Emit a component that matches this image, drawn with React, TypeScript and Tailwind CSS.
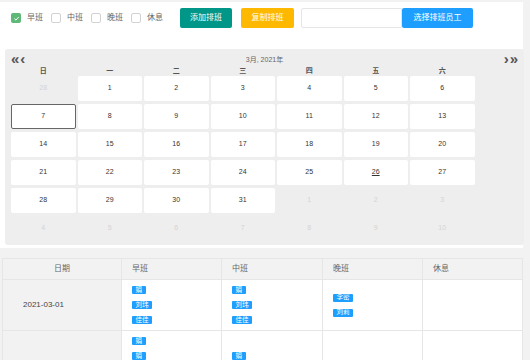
const font = "font-['Liberation_Sans','Noto_Sans_CJK_SC',sans-serif]";

const weekDays = ["日", "一", "二", "三", "四", "五", "六"];

type Day = { n: number; cur: boolean };

const days: Day[] = [
  { n: 28, cur: false },
  ...Array.from({ length: 31 }, (_, i) => ({ n: i + 1, cur: true })),
  ...Array.from({ length: 10 }, (_, i) => ({ n: i + 1, cur: false })),
];

function Check({ label, checked }: { label: string; checked?: boolean }) {
  return (
    <label className="flex items-center mr-[8px]">
      {checked ? (
        <span className="w-[10px] h-[10px] rounded-[2px] bg-[#5FB878] flex items-center justify-center">
          <svg width="7" height="7" viewBox="0 0 10 10">
            <path d="M2 5.2 L4.2 7.3 L8.2 2.8" fill="none" stroke="white" strokeWidth="1.4" />
          </svg>
        </span>
      ) : (
        <span className="w-[10px] h-[10px] rounded-[2px] bg-white border border-[#d2d2d2]" />
      )}
      <span className="ml-[6px] text-[8px] text-[#666]">{label}</span>
    </label>
  );
}

function Tag({ name }: { name: string }) {
  return (
    <span className="inline-flex items-center h-[8px] px-[3.5px] rounded-[1px] bg-[#1E9FFF] text-white text-[6.5px] leading-none">
      {name}
    </span>
  );
}

function Tags({ names }: { names: string[] }) {
  return (
    <div className="flex flex-col items-start gap-[7px]">
      {names.map((n, i) => (
        <Tag key={i} name={n} />
      ))}
    </div>
  );
}

const rows = [
  {
    date: "2021-03-01",
    early: ["娟", "刘玮", "佳佳"],
    mid: ["娟", "刘玮", "佳佳"],
    late: ["李密", "刘莉"],
    rest: [] as string[],
  },
  {
    date: "2021-03-02",
    early: ["娟", "娟", "刘玮", "佳佳", "李密"],
    mid: ["娟", "刘玮", "佳佳"],
    late: ["李密", "刘莉"],
    rest: [] as string[],
  },
];

export default function App() {
  return (
    <div className={`w-[530px] h-[360px] overflow-hidden bg-[#f2f2f2] pt-[2px] antialiased ${font}`}>
      {/* top panel */}
      <div className="w-[523px] bg-white pt-[6px] pb-[3px]">
        <div className="flex items-center h-[20px] pl-[11px]">
          <Check label="早班" checked />
          <Check label="中班" />
          <Check label="晚班" />
          <Check label="休息" />
          <button className="ml-[9px] w-[52px] h-[20px] rounded-[2px] bg-[#009688] text-white text-[8px]">
            添加排班
          </button>
          <button className="ml-[9px] w-[53px] h-[20px] rounded-[2px] bg-[#FFB800] text-white text-[8px]">
            复制排班
          </button>
          <input
            className="ml-[7px] w-[101px] h-[20px] border border-[#e6e6e6] rounded-l-[2px] bg-white outline-none"
            readOnly
          />
          <button className="w-[71px] h-[20px] rounded-[2px] bg-[#1E9FFF] text-white text-[8px]">
            选择排班员工
          </button>
        </div>

        {/* calendar */}
        <div className="ml-[5px] mt-[21px] w-[519px] bg-[#eeeeee] rounded-[3px] pt-[4px] pb-[4px]">
          <div className="relative flex items-center justify-between h-[12px] px-[6px] text-[#555]">
            <div className="flex items-center font-bold text-[15px] leading-none -mt-[2px]">
              <span>«</span>
              <span className="ml-[1px]">‹</span>
            </div>
            <div className="absolute left-0 right-0 text-center text-[7px] text-[#666] leading-none">3月, 2021年</div>
            <div className="flex items-center font-bold text-[15px] leading-none -mt-[2px]">
              <span>›</span>
              <span className="ml-[1px]">»</span>
            </div>
          </div>
          <div className="pl-[6px]">
            <div className="grid grid-cols-[repeat(7,64.5px)] gap-x-[2px] h-[11px] items-center">
              {weekDays.map((d) => (
                <div key={d} className="text-center text-[7px] font-semibold text-[#555] leading-none">
                  {d}
                </div>
              ))}
            </div>
            <div className="grid grid-cols-[repeat(7,64.5px)] gap-x-[2px] gap-y-[3px]">
              {days.map((d, i) => (
                <div
                  key={i}
                  className={
                    "h-[25px] flex items-center justify-center text-[7px] rounded-[2px] " +
                    (d.cur ? "bg-white text-[#333] " : "text-[#d4d4d4] ") +
                    (d.cur && d.n === 7 ? "border border-[#666] " : "") +
                    (d.cur && d.n === 26 ? "underline " : "")
                  }
                >
                  {d.n}
                </div>
              ))}
            </div>
          </div>
        </div>
      </div>

      {/* schedule table */}
      <div className="mt-[10px] ml-[2px] w-[520px]">
        <table className="table-fixed border-collapse w-[520px] text-[8px] text-[#666]">
          <colgroup>
            <col className="w-[119px]" />
            <col className="w-[100px]" />
            <col className="w-[101px]" />
            <col className="w-[100px]" />
            <col className="w-[100px]" />
          </colgroup>
          <thead>
            <tr className="h-[21px] bg-[#f2f2f2]">
              <th className="border border-[#e6e6e6] font-normal text-center">日期</th>
              <th className="border border-[#e6e6e6] font-normal text-left pl-[10px]">早班</th>
              <th className="border border-[#e6e6e6] font-normal text-left pl-[10px]">中班</th>
              <th className="border border-[#e6e6e6] font-normal text-left pl-[10px]">晚班</th>
              <th className="border border-[#e6e6e6] font-normal text-left pl-[10px]">休息</th>
            </tr>
          </thead>
          <tbody>
            {rows.map((r) => (
              <tr key={r.date}>
                <td className="border border-[#e6e6e6] bg-[#f2f2f2] pl-[20px] text-[#444] align-middle">{r.date}</td>
                <td className="border border-[#e6e6e6] bg-white pl-[10px] py-[6px] align-middle">
                  <Tags names={r.early} />
                </td>
                <td className="border border-[#e6e6e6] bg-white pl-[10px] py-[6px] align-middle">
                  <Tags names={r.mid} />
                </td>
                <td className="border border-[#e6e6e6] bg-white pl-[10px] py-[6px] align-middle">
                  <Tags names={r.late} />
                </td>
                <td className="border border-[#e6e6e6] bg-white pl-[10px] py-[6px] align-middle">
                  <Tags names={r.rest} />
                </td>
              </tr>
            ))}
          </tbody>
        </table>
      </div>
    </div>
  );
}
